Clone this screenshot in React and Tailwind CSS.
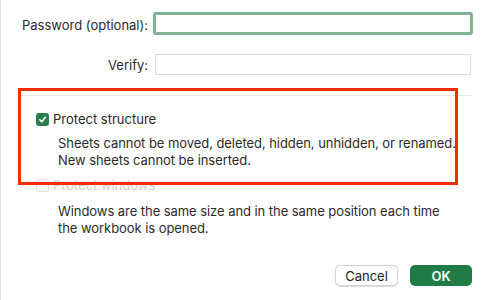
import { useState } from "react";

const Checkbox = ({ checked, disabled }) => (
  <span
    className={`flex items-center justify-center w-[13px] h-[13px] rounded-[3px] ${
      checked
        ? "bg-[#2a7d4f]"
        : disabled
        ? "border border-[#dedede] bg-white"
        : "border border-[#b5b5b5] bg-white"
    }`}
  >
    {checked && (
      <svg width="9" height="9" viewBox="0 0 10 10">
        <path
          d="M2 5.3 L4.2 7.5 L8.2 2.6"
          fill="none"
          stroke="white"
          strokeWidth="1.8"
          strokeLinecap="round"
          strokeLinejoin="round"
        />
      </svg>
    )}
  </span>
);

const App = () => {
  const [password, setPassword] = useState("");
  const [verify, setVerify] = useState("");

  return (
    <div
      className="relative w-[487px] h-[300px] bg-white text-[#262626] text-[13px] leading-[16px] border-l border-[#e4e4e4] overflow-hidden"
      style={{ fontFamily: "Inter, 'Liberation Sans', sans-serif" }}
    >
      {/* password fields */}
      <div className="flex items-center pt-[12px]">
        <label className="w-[147px] pt-[2px] text-right text-[#2b2b2b]">Password (optional):</label>
        <input
          value={password}
          onChange={(e) => setPassword(e.target.value)}
          className="ml-[5px] w-[320px] h-[23px] border-[3px] border-[#80b392] rounded-[3px] outline-none bg-white"
        />
      </div>
      <div className="flex items-center mt-[19px]">
        <label className="w-[147px] text-right text-[#2b2b2b]">Verify:</label>
        <input
          value={verify}
          onChange={(e) => setVerify(e.target.value)}
          className="ml-[7px] w-[316px] h-[21px] border border-[#dcdcdc] outline-none bg-white"
        />
      </div>

      <div className="ml-[19px] mt-[20px] w-[452px] h-px bg-[#e6e6e6]" />

      {/* protect structure */}
      <div className="flex items-center gap-[4px] ml-[35px] mt-[15px]">
        <Checkbox checked />
        <span className="text-[#262626]">Protect structure</span>
      </div>
      <div className="ml-[57px] mt-[8px] leading-[17px] tracking-[-0.06px] text-[#2b2b2b]">
        <p>Sheets cannot be moved, deleted, hidden, unhidden, or renamed.</p>
        <p>New sheets cannot be inserted.</p>
      </div>

      {/* protect windows */}
      <div className="flex items-center gap-[4px] ml-[35px] mt-[8px]">
        <Checkbox disabled />
        <span className="text-[#cfcfcf]">Protect windows</span>
      </div>
      <div className="ml-[57px] mt-[10px] leading-[17px] tracking-[-0.06px] text-[#2b2b2b]">
        <p>Windows are the same size and in the same position each time</p>
        <p>the workbook is opened.</p>
      </div>

      {/* buttons */}
      <div className="flex justify-end gap-[12px] pr-[15px] mt-[28px]">
        <button className="w-[63px] h-[21px] rounded-[5px] bg-white border border-[#d4d4d4] shadow-[0_0.5px_1px_rgba(0,0,0,0.15)] text-[#222]">
          Cancel
        </button>
        <button className="w-[62px] h-[21px] rounded-[5px] bg-[#1f7c47] text-white font-semibold">
          OK
        </button>
      </div>

      {/* annotation */}
      <div className="absolute left-[17px] top-[88px] w-[440px] h-[97px] border-[3px] border-[#ff2a00] pointer-events-none" />
    </div>
  );
};

export default App;
